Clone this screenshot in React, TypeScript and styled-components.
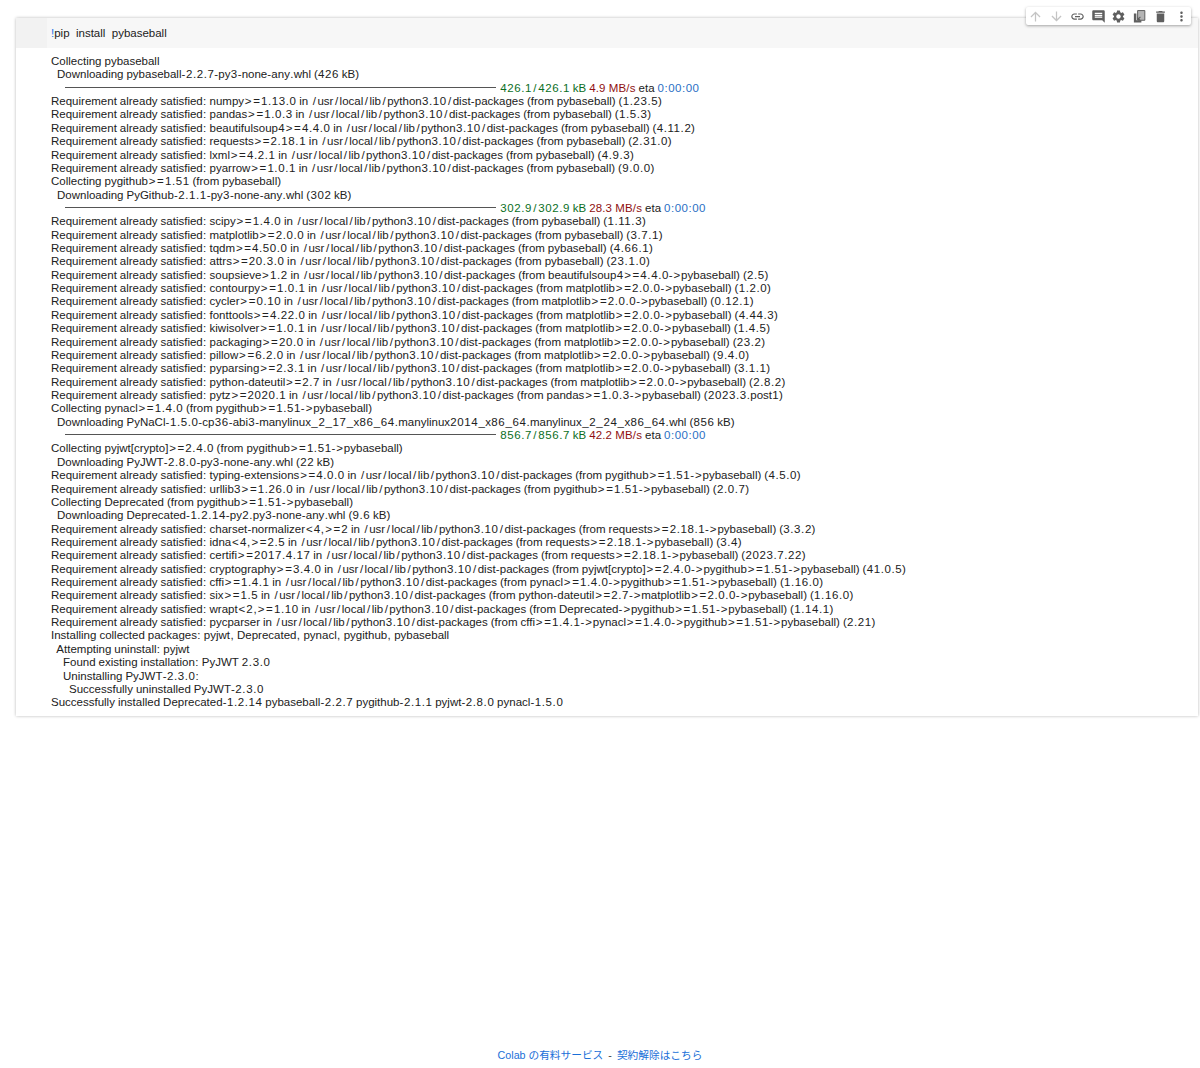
import styled, { createGlobalStyle } from 'styled-components';
import { MdArrowUpward, MdArrowDownward, MdLink, MdComment, MdSettings, MdDelete, MdMoreVert } from 'react-icons/md';

const GlobalStyle = createGlobalStyle`
  html, body {
    margin: 0;
    padding: 0;
    background: #fff;
  }
`;

type Row =
  | { kind: 'text'; text: string }
  | { kind: 'bar'; done: string; speed: string; eta: string };

const t = (text: string): Row => ({ kind: 'text', text });
const REQ = 'Requirement already satisfied: ';
const PKG = '/usr/local/lib/python3.10/dist-packages';

const rows: Row[] = [
  t('Collecting pybaseball'),
  t('  Downloading pybaseball-2.2.7-py3-none-any.whl (426 kB)'),
  { kind: 'bar', done: '426.1/426.1 kB', speed: '4.9 MB/s', eta: '0:00:00' },
  t(`${REQ}numpy>=1.13.0 in ${PKG} (from pybaseball) (1.23.5)`),
  t(`${REQ}pandas>=1.0.3 in ${PKG} (from pybaseball) (1.5.3)`),
  t(`${REQ}beautifulsoup4>=4.4.0 in ${PKG} (from pybaseball) (4.11.2)`),
  t(`${REQ}requests>=2.18.1 in ${PKG} (from pybaseball) (2.31.0)`),
  t(`${REQ}lxml>=4.2.1 in ${PKG} (from pybaseball) (4.9.3)`),
  t(`${REQ}pyarrow>=1.0.1 in ${PKG} (from pybaseball) (9.0.0)`),
  t('Collecting pygithub>=1.51 (from pybaseball)'),
  t('  Downloading PyGithub-2.1.1-py3-none-any.whl (302 kB)'),
  { kind: 'bar', done: '302.9/302.9 kB', speed: '28.3 MB/s', eta: '0:00:00' },
  t(`${REQ}scipy>=1.4.0 in ${PKG} (from pybaseball) (1.11.3)`),
  t(`${REQ}matplotlib>=2.0.0 in ${PKG} (from pybaseball) (3.7.1)`),
  t(`${REQ}tqdm>=4.50.0 in ${PKG} (from pybaseball) (4.66.1)`),
  t(`${REQ}attrs>=20.3.0 in ${PKG} (from pybaseball) (23.1.0)`),
  t(`${REQ}soupsieve>1.2 in ${PKG} (from beautifulsoup4>=4.4.0->pybaseball) (2.5)`),
  t(`${REQ}contourpy>=1.0.1 in ${PKG} (from matplotlib>=2.0.0->pybaseball) (1.2.0)`),
  t(`${REQ}cycler>=0.10 in ${PKG} (from matplotlib>=2.0.0->pybaseball) (0.12.1)`),
  t(`${REQ}fonttools>=4.22.0 in ${PKG} (from matplotlib>=2.0.0->pybaseball) (4.44.3)`),
  t(`${REQ}kiwisolver>=1.0.1 in ${PKG} (from matplotlib>=2.0.0->pybaseball) (1.4.5)`),
  t(`${REQ}packaging>=20.0 in ${PKG} (from matplotlib>=2.0.0->pybaseball) (23.2)`),
  t(`${REQ}pillow>=6.2.0 in ${PKG} (from matplotlib>=2.0.0->pybaseball) (9.4.0)`),
  t(`${REQ}pyparsing>=2.3.1 in ${PKG} (from matplotlib>=2.0.0->pybaseball) (3.1.1)`),
  t(`${REQ}python-dateutil>=2.7 in ${PKG} (from matplotlib>=2.0.0->pybaseball) (2.8.2)`),
  t(`${REQ}pytz>=2020.1 in ${PKG} (from pandas>=1.0.3->pybaseball) (2023.3.post1)`),
  t('Collecting pynacl>=1.4.0 (from pygithub>=1.51->pybaseball)'),
  t('  Downloading PyNaCl-1.5.0-cp36-abi3-manylinux_2_17_x86_64.manylinux2014_x86_64.manylinux_2_24_x86_64.whl (856 kB)'),
  { kind: 'bar', done: '856.7/856.7 kB', speed: '42.2 MB/s', eta: '0:00:00' },
  t('Collecting pyjwt[crypto]>=2.4.0 (from pygithub>=1.51->pybaseball)'),
  t('  Downloading PyJWT-2.8.0-py3-none-any.whl (22 kB)'),
  t(`${REQ}typing-extensions>=4.0.0 in ${PKG} (from pygithub>=1.51->pybaseball) (4.5.0)`),
  t(`${REQ}urllib3>=1.26.0 in ${PKG} (from pygithub>=1.51->pybaseball) (2.0.7)`),
  t('Collecting Deprecated (from pygithub>=1.51->pybaseball)'),
  t('  Downloading Deprecated-1.2.14-py2.py3-none-any.whl (9.6 kB)'),
  t(`${REQ}charset-normalizer<4,>=2 in ${PKG} (from requests>=2.18.1->pybaseball) (3.3.2)`),
  t(`${REQ}idna<4,>=2.5 in ${PKG} (from requests>=2.18.1->pybaseball) (3.4)`),
  t(`${REQ}certifi>=2017.4.17 in ${PKG} (from requests>=2.18.1->pybaseball) (2023.7.22)`),
  t(`${REQ}cryptography>=3.4.0 in ${PKG} (from pyjwt[crypto]>=2.4.0->pygithub>=1.51->pybaseball) (41.0.5)`),
  t(`${REQ}cffi>=1.4.1 in ${PKG} (from pynacl>=1.4.0->pygithub>=1.51->pybaseball) (1.16.0)`),
  t(`${REQ}six>=1.5 in ${PKG} (from python-dateutil>=2.7->matplotlib>=2.0.0->pybaseball) (1.16.0)`),
  t(`${REQ}wrapt<2,>=1.10 in ${PKG} (from Deprecated->pygithub>=1.51->pybaseball) (1.14.1)`),
  t(`${REQ}pycparser in ${PKG} (from cffi>=1.4.1->pynacl>=1.4.0->pygithub>=1.51->pybaseball) (2.21)`),
  t('Installing collected packages: pyjwt, Deprecated, pynacl, pygithub, pybaseball'),
  t('  Attempting uninstall: pyjwt'),
  t('    Found existing installation: PyJWT 2.3.0'),
  t('    Uninstalling PyJWT-2.3.0:'),
  t('      Successfully uninstalled PyJWT-2.3.0'),
  t('Successfully installed Deprecated-1.2.14 pybaseball-2.2.7 pygithub-2.1.1 pyjwt-2.8.0 pynacl-1.5.0'),
];

// the reference font sets digits and symbols wider than Liberation Sans does
function trackFor(token: string) {
  if (/^[<>=]+$/.test(token)) return 1.6;
  if (token === '/') return 3;
  if (/^[0-9.:]+$/.test(token)) return 0.6;
  if (token === '_' || token === ',') return 0.8;
  if (token === '-') return 0.3;
  return 0;
}

function Tracked({ text }: { text: string }) {
  return (
    <>
      {text.split(/([<>=]+|\/|[0-9.:]+|[_,-])/).map((part, i) => {
        const track = trackFor(part);
        return track ? <Wide key={i} $track={track}>{part}</Wide> : part;
      })}
    </>
  );
}

function MirrorIcon() {
  return (
    <svg width="15" height="15" viewBox="0 0 24 24" fill="none">
      <path d="M9 2.5h11.5v15.5H9z" fill="#b5b5b5" stroke="#5f5f5f" strokeWidth="1.6" />
      <path d="M3 7h4v11h8v3.5H3z" fill="#5f5f5f" />
      <path d="M8.5 12.5v5h5l-1.8-1.8 2.4-2.4-1.3-1.3-2.4 2.4z" fill="#5f5f5f" />
    </svg>
  );
}

export default function App() {
  return (
    <Page>
      <GlobalStyle />
      <Cell>
        <Toolbar>
          <ToolButton $muted><MdArrowUpward /></ToolButton>
          <ToolButton $muted><MdArrowDownward /></ToolButton>
          <ToolButton><MdLink /></ToolButton>
          <ToolButton><MdComment /></ToolButton>
          <ToolButton><MdSettings /></ToolButton>
          <ToolButton><MirrorIcon /></ToolButton>
          <ToolButton><MdDelete /></ToolButton>
          <ToolButton><MdMoreVert /></ToolButton>
        </Toolbar>
        <CodeRow>
          <Gutter />
          <Code><Bang>!</Bang>pip  install  pybaseball</Code>
        </CodeRow>
        <Output>
          {rows.map((row, i) =>
            row.kind === 'text' ? (
              <Line key={i}><Tracked text={row.text} /></Line>
            ) : (
              <Line key={i}>
                <Bar />
                <Done><Tracked text={row.done} /></Done> <Speed>{row.speed}</Speed> eta <Eta>{row.eta}</Eta>
              </Line>
            ),
          )}
        </Output>
      </Cell>
      <Footer>
        <FooterLink>Colab の有料サービス</FooterLink>
        <Separator>-</Separator>
        <FooterLink>契約解除はこちら</FooterLink>
      </Footer>
    </Page>
  );
}

const Page = styled.div`
  min-height: 1068px;
  box-sizing: border-box;
  padding: 18px 2px 5px 16px;
  display: flex;
  flex-direction: column;
  font-family: 'Liberation Sans', Arial, sans-serif;
`;

const Cell = styled.section`
  position: relative;
  background: #fff;
  box-shadow: 0 0 3px rgba(0, 0, 0, 0.28);
`;

const Toolbar = styled.div`
  position: absolute;
  top: -11px;
  right: 7px;
  width: 165px;
  height: 18px;
  display: flex;
  align-items: center;
  justify-content: center;
  background: #fff;
  border-radius: 2px;
  box-shadow: 0 1px 3px rgba(0, 0, 0, 0.35);
`;

const ToolButton = styled.span<{ $muted?: boolean }>`
  flex: 0 0 20.8px;
  height: 18px;
  display: flex;
  align-items: center;
  justify-content: center;
  font-size: 15px;
  color: ${({ $muted }) => ($muted ? '#c4c4c4' : '#5f5f5f')};
`;

const CodeRow = styled.div`
  display: flex;
  height: 30px;
  background: #f7f7f7;
`;

const Gutter = styled.div`
  width: 31px;
  background: #f2f2f2;
`;

const Code = styled.div`
  padding-left: 4px;
  font-size: 11.5px;
  line-height: 30px;
  white-space: pre;
  color: #212121;
`;

const Bang = styled.span`
  color: #1a73e8;
`;

const Output = styled.div`
  padding: 7px 0 6px 35px;
  font-size: 11.5px;
  word-spacing: -0.2px;
  color: #212121;
`;

const Line = styled.div`
  height: 13.36px;
  line-height: 13.36px;
  white-space: pre;
`;

const Wide = styled.span<{ $track: number }>`
  letter-spacing: ${({ $track }) => $track}px;
  margin-left: ${({ $track }) => $track / 2}px;
  margin-right: ${({ $track }) => -$track / 2}px;
`;

const Bar = styled.span`
  display: inline-block;
  width: 431px;
  height: 1px;
  margin: 0 4px 3px 14px;
  vertical-align: middle;
  background: #555;
`;

const Done = styled.span`
  color: #0a6e1e;
`;

const Speed = styled.span`
  color: #8f1010;
  letter-spacing: 0.15px;
`;

const Eta = styled.span`
  color: #2a6fc4;
  letter-spacing: 0.5px;
`;

const Footer = styled.footer`
  margin-top: auto;
  margin-left: -16px;
  margin-right: -2px;
  display: flex;
  justify-content: center;
  gap: 5px;
  font-family: 'Liberation Sans', 'Noto Sans CJK JP', sans-serif;
  font-size: 10.7px;
  line-height: 16px;
`;

const FooterLink = styled.span`
  color: #1a6fd8;
`;

const Separator = styled.span`
  color: #444;
`;
